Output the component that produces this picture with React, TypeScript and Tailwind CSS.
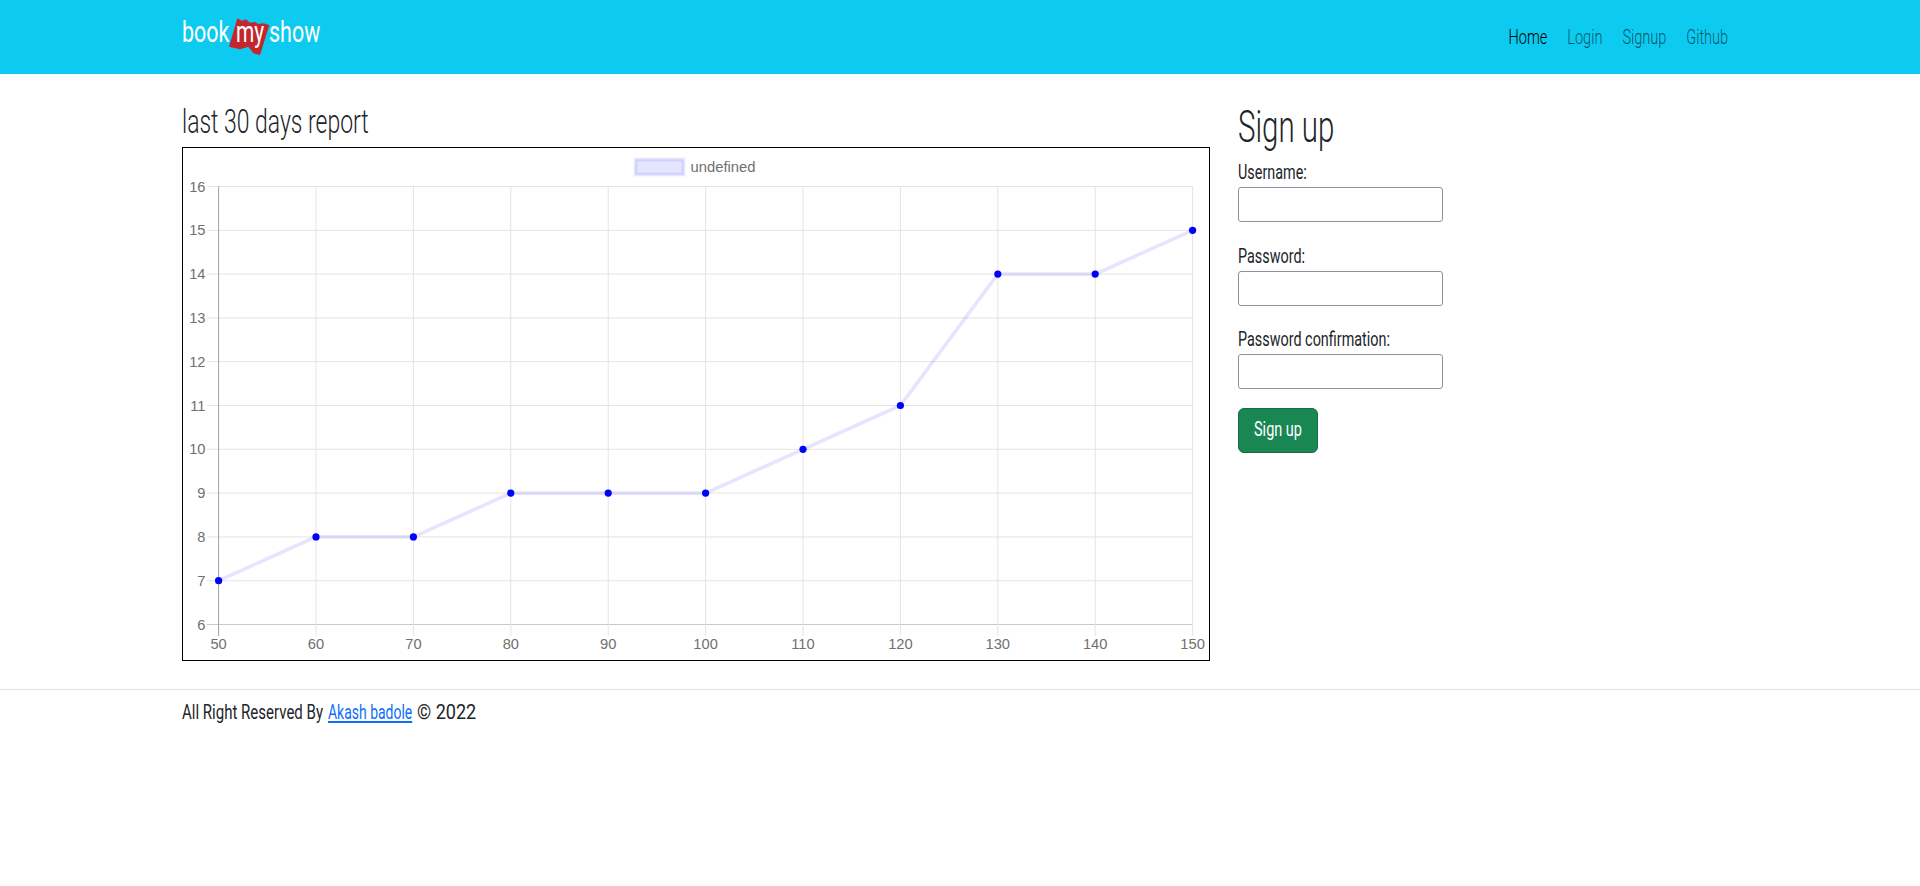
import React from "react";

const data = [7, 8, 8, 9, 9, 9, 10, 11, 14, 14, 15];
const xs = data.map((_, i) => 218.6 + i * 97.4);
const yOf = (v: number) => 186.5 + (16 - v) * 43.8;

function Chart() {
  const pts = data.map((v, i) => `${xs[i] - 183},${yOf(v) - 148}`).join(" ");
  const yTicks = [16, 15, 14, 13, 12, 11, 10, 9, 8, 7, 6];
  return (
    <svg width="1026" height="512" viewBox="0 0 1026 512" className="block">
      <rect x="452.5" y="11.5" width="48" height="15" fill="rgba(0,0,255,0.1)" stroke="rgba(0,0,255,0.1)" strokeWidth="3.6" />
      <text x="507.5" y="24" fontFamily="Liberation Sans" fontSize="14.8" fill="#707070">undefined</text>
      {yTicks.map((v) => {
        const y = yOf(v) - 148;
        return (
          <g key={v}>
            <line x1="24" x2={xs[10] - 183} y1={y} y2={y} stroke={v === 6 ? "#c8c8c8" : "#e4e4e4"} strokeWidth="1" />
            <text x="22.5" y={y + 5} textAnchor="end" fontFamily="Liberation Sans" fontSize="14.7" fill="#707070">{v}</text>
          </g>
        );
      })}
      {xs.map((x, i) => (
        <g key={x}>
          <line x1={x - 183} x2={x - 183} y1="38.4" y2="488" stroke={i === 0 ? "#a0a0a0" : "#e4e4e4"} strokeWidth="1" />
          <text x={x - 183} y="501" textAnchor="middle" fontFamily="Liberation Sans" fontSize="14.7" fill="#707070">{50 + i * 10}</text>
        </g>
      ))}
      <polyline points={pts} fill="none" stroke="rgba(0,0,255,0.1)" strokeWidth="3.6" />
      {data.map((v, i) => (
        <circle key={i} cx={xs[i] - 183} cy={yOf(v) - 148} r="3.6" fill="#0000ff" />
      ))}
    </svg>
  );
}

function Logo() {
  return (
    <div className="relative w-[140px] h-[74px] text-white text-[29px] font-normal leading-none">
      <svg className="absolute left-[-22px] top-0" width="200" height="80" viewBox="0 0 600 240">
        <polygon
          points="232,55 245,62 258,58 270,68 285,66 295,72 310,70 328,75 300,165 280,160 265,140 240,148 207,140"
          fill="#c4262e"
        />
      </svg>
      <span className="absolute left-0 top-[18px] origin-left scale-x-[0.74]">book</span>
      <span className="absolute left-[54px] top-[18px] origin-left scale-x-[0.72]">my</span>
      <span className="absolute left-[87px] top-[18px] origin-left scale-x-[0.74]">show</span>
    </div>
  );
}

export default function App() {
  return (
    <div className="min-h-[886px] bg-white text-[#212529] font-['Roboto',sans-serif]">
      <nav className="h-[74px] bg-[#0dcaf0] pl-[182px] pr-[192px] flex items-center justify-between">
        <Logo />
        <div className="flex gap-[29px] pt-[1px] text-[21px] font-light text-black/60 origin-right scale-x-[0.69] whitespace-nowrap">
          <span className="text-black">Home</span>
          <span>Login</span>
          <span>Signup</span>
          <span>Github</span>
        </div>
      </nav>
      <main className="pl-[182px] pt-[28px] flex gap-[28px] h-[615px]">
        <div className="w-[1028px]">
          <h2 className="text-[33px] font-light leading-[38px] pt-[1px] mb-[6px] origin-left scale-x-[0.695] whitespace-nowrap">last 30 days report</h2>
          <div className="border border-black w-[1028px] h-[514px]">
            <Chart />
          </div>
        </div>
        <div className="w-[206px]">
          <h1 className="text-[44px] font-light leading-[48px] pt-[1px] mb-[6px] origin-left scale-x-[0.67] whitespace-nowrap">Sign up</h1>
          {["Username:", "Password:", "Password confirmation:"].map((l) => (
            <div key={l} className="mb-[18.5px]">
              <label className="block text-[21px] leading-[30px] origin-left scale-x-[0.685] whitespace-nowrap">{l}</label>
              <input className="block w-[205px] h-[35px] border border-[#8f8f9d] rounded-[3px]" />
            </div>
          ))}
          <button className="block bg-[#198754] text-white rounded-[6px] w-[80px] h-[45px] border border-[#146c43]">
            <span className="block text-[21px] scale-x-[0.69] whitespace-nowrap">Sign up</span>
          </button>
        </div>
      </main>
      <footer className="border-t border-[#dee2e6] pl-[182px] pt-[7px] text-[21px] leading-[30px] flex whitespace-nowrap">
        <span className="w-[146px] origin-left scale-x-[0.715]">All Right Reserved By</span>
        <a href="#" className="w-[89px] text-[#0d6efd] underline origin-left scale-x-[0.665] block h-[30px]">Akash badole</a>
        <span className="origin-left scale-x-[0.86]">© 2022</span>
      </footer>
    </div>
  );
}
